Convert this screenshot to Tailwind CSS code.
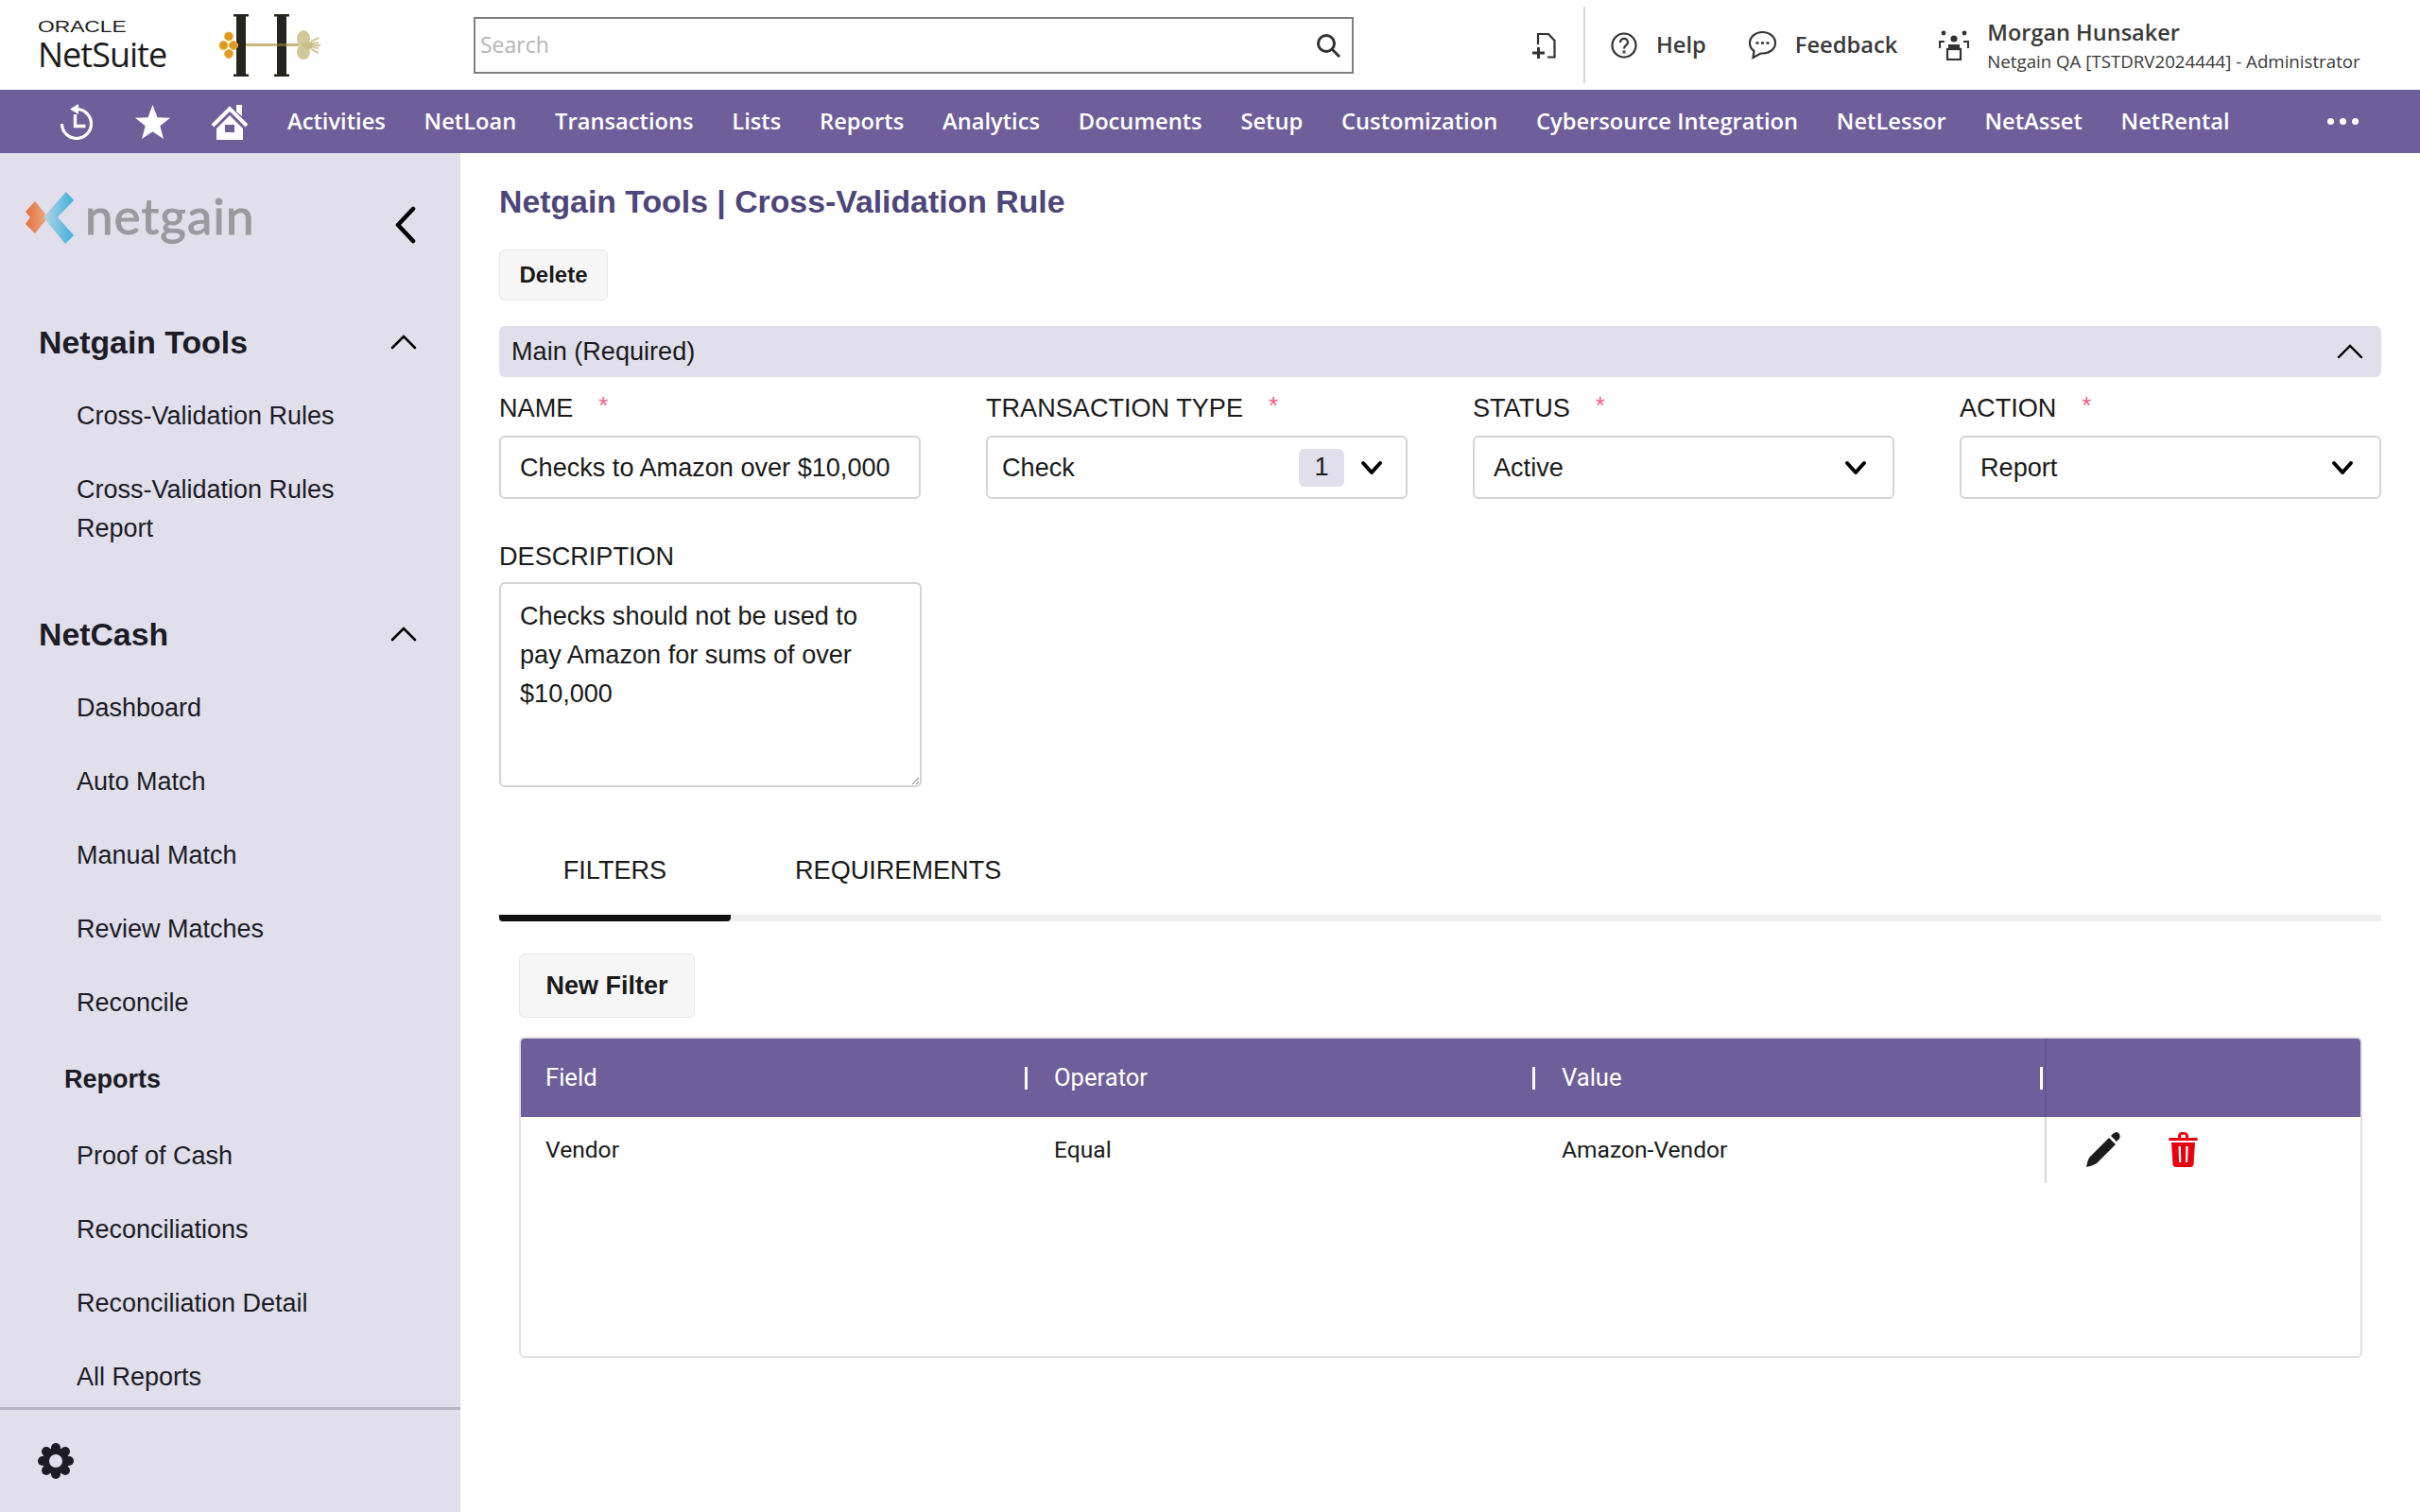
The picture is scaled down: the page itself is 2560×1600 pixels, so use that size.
<!DOCTYPE html>
<html lang="en">
<head>
  <meta charset="UTF-8">
  <title>Netgain Tools | Cross-Validation Rule</title>
  <script src="https://cdn.jsdelivr.net/npm/@tailwindcss/browser@4"></script>
</head>
<body class="bg-white text-[#1a1a1a] font-['Liberation_Sans',Arial,sans-serif]">
<div class="w-[2560px] h-[1600px] overflow-hidden flex flex-col">

  <!-- Top header -->
  <header class="h-[95px] flex items-center font-['Open_Sans',sans-serif] shrink-0">
    <div class="w-[192px] pl-[40px] flex flex-col text-[#1c1c1c]">
      <span class="font-['Liberation_Sans',sans-serif] text-[17px] leading-[20px] scale-x-[1.34] origin-left">ORACLE</span>
      <span class="text-[36px] leading-[38px] tracking-[-1px]">NetSuite</span>
    </div>
    <!-- H logo -->
    <svg class="w-[150px] h-[70px] mr-[159px]" viewBox="0 0 150 70">
      <rect x="58" y="3" width="10" height="64" fill="#26241f"/>
      <rect x="55" y="2" width="16" height="2.500" fill="#26241f"/>
      <rect x="55" y="65.500" width="16" height="2.500" fill="#26241f"/>
      <rect x="101" y="3" width="10" height="64" fill="#26241f"/>
      <rect x="98" y="2" width="16" height="2.500" fill="#26241f"/>
      <rect x="98" y="65.500" width="16" height="2.500" fill="#26241f"/>
      <rect x="68" y="33" width="56" height="3" fill="#c9b77e"/>
      <rect x="101" y="33" width="10" height="3" fill="#6b5f38"/>
      <g fill="#dd9a20" stroke="#eeb64a" stroke-width="1">
        <circle cx="50" cy="25.500" r="4.500"/><circle cx="44.500" cy="35" r="4.500"/><circle cx="55" cy="35" r="4.500"/><circle cx="50" cy="44" r="4.500"/>
      </g>
      <ellipse cx="129" cy="28" rx="7" ry="9" fill="#d2c89a"/>
      <ellipse cx="129" cy="42" rx="7" ry="8" fill="#d2c89a"/>
      <ellipse cx="134" cy="35" rx="6" ry="4" fill="#c8bd8b"/>
      <path d="M138 35h9M137 31l8-4M137 39l8 4M139 33l6-1M139 37l6 1" stroke="#d2c89a" stroke-width="2"/>
    </svg>

    <!-- Search -->
    <div class="w-[931px] h-[60px] border-2 border-[#808080] flex items-center pl-[5px] pr-[12px]">
      <input type="text" placeholder="Search" class="flex-1 text-[23px] outline-none placeholder:text-[#b5b5b5]">
      <svg class="w-[26px] h-[26px]" viewBox="0 0 26 26" fill="none" stroke="#333" stroke-width="3"><circle cx="11" cy="11" r="8.500"/><path d="M17 17l8 8"/></svg>
    </div>

    <!-- New record -->
    <svg class="w-[28px] h-[28px] ml-[188px]" viewBox="0 0 28 28" fill="none" stroke="#333" stroke-width="2.200"><path d="M7 13V2h11l6.500 7v17.500H17"/><path d="M1 22h13M7.500 16v12" stroke-width="3"/></svg>
    <div class="w-[2px] h-[81px] bg-[#d9d9d9] ml-[27px]"></div>

    <svg class="w-[28px] h-[28px] ml-[27px]" viewBox="0 0 28 28" fill="none" stroke="#333" stroke-width="2.200"><circle cx="14" cy="14" r="12.500"/><path d="M10 11c0-5.500 8-5.500 8 0 0 3-4 3-4 6.500"/><circle cx="14" cy="21" r="0.600"/></svg>
    <span class="ml-[20px] text-[23.7px] font-semibold text-[#3a3a3a] leading-none">Help</span>

    <svg class="w-[31px] h-[31px] ml-[44px]" viewBox="0 0 31 31" fill="none" stroke="#333" stroke-width="2.200"><path d="M15.500 2C8 2 2 7 2 13.500c0 3.500 1.800 6.500 4.500 8.500L5.500 29l8-4.500h2c7.500 0 13.500-4.500 13.500-11S23 2 15.500 2z"/><path d="M9.500 13.500h1M15 13.500h1M20.500 13.500h1" stroke-width="2.600" stroke-linecap="round"/></svg>
    <span class="ml-[19px] text-[23.7px] font-semibold text-[#3a3a3a] leading-none">Feedback</span>

    <svg class="w-[32px] h-[32px] ml-[44px]" viewBox="0 0 32 32" fill="#333">
      <circle cx="16" cy="9" r="3.600"/><circle cx="5" cy="3" r="2.400"/><circle cx="27" cy="3" r="2.400"/>
      <path d="M1 19v-7h5M31 19v-7h-5" fill="none" stroke="#333" stroke-width="2.200"/>
      <path d="M10 20v-5h12v5z"/>
      <rect x="9" y="20" width="14" height="11" fill="none" stroke="#333" stroke-width="2.200"/>
    </svg>
    <div class="ml-[19px] pt-[1px] flex flex-col text-[#3a3a3a]">
      <span class="text-[23.5px] leading-[32px] font-semibold">Morgan Hunsaker</span>
      <span class="text-[18.7px] leading-[29px] whitespace-nowrap">Netgain QA [TSTDRV2024444] - Administrator</span>
    </div>
  </header>

  <!-- Purple nav -->
  <nav class="h-[67px] shrink-0 bg-[#6e5f9b] flex items-center text-white font-['Open_Sans',sans-serif] text-[23.7px] font-semibold leading-none">
    <svg class="w-[36px] h-[38px] ml-[63px]" viewBox="0 0 36 38" fill="none" stroke="#fff" stroke-width="3.200"><path d="M18 5.500A15.500 15.500 0 1 1 2.500 21"/><path d="M11 5.500l9-5.500v11z" fill="#fff" stroke="none"/><path d="M16.500 11v12.500h11" stroke-width="3.400"/></svg>
    <svg class="w-[37px] h-[36px] ml-[44px]" viewBox="0 0 37 36" fill="#fff"><path d="M18.500 0l5 13.200 13.500.6-10.700 8.500L30 36l-11.500-7.800L7 36l3.700-13.700L0 13.800l13.500-.6z"/></svg>
    <svg class="w-[40px] h-[38px] ml-[43px]" viewBox="0 0 40 38" fill="#fff"><path d="M2 23L20 5l18 18" fill="none" stroke="#fff" stroke-width="4"/><path d="M27 1h6v12l-6-5z"/><path fill-rule="evenodd" d="M20 12L6 26v12h28V26zM15 22h10v8H15z"/></svg>
    <div class="flex items-center gap-[40.800px] ml-[41px] pt-[1px] whitespace-nowrap">
      <span>Activities</span><span>NetLoan</span><span>Transactions</span><span>Lists</span><span>Reports</span><span>Analytics</span><span>Documents</span><span>Setup</span><span>Customization</span><span>Cybersource Integration</span><span>NetLessor</span><span>NetAsset</span><span>NetRental</span>
    </div>
    <div class="flex gap-[6px] ml-auto mr-[65px]">
      <span class="w-[7px] h-[7px] rounded-full bg-white"></span><span class="w-[7px] h-[7px] rounded-full bg-white"></span><span class="w-[7px] h-[7px] rounded-full bg-white"></span>
    </div>
  </nav>

  <div class="flex flex-1 min-h-0">
    <!-- Sidebar -->
    <aside class="w-[487px] shrink-0 bg-[#e0dfeb] flex flex-col text-[27px] text-[#1c1b26]">
      <div class="h-[161px] shrink-0 flex items-start pl-[27px] pr-[46px] pt-[41px]">
        <svg class="w-[52px] h-[56px]" viewBox="0 0 52 56">
          <defs>
            <linearGradient id="ngBlue" x1="0" x2="1" y1="0" y2="0"><stop offset="0" stop-color="#b9d4e4"/><stop offset="1" stop-color="#3db0dc"/></linearGradient>
            <linearGradient id="ngOrange" x1="0" x2="1" y1="0" y2="0"><stop offset="0" stop-color="#e56f38"/><stop offset="1" stop-color="#eeaa8c"/></linearGradient>
          </defs>
          <path d="M10 10L24 27 10 44 0 34l5-7-5-6z" fill="url(#ngOrange)"/>
          <path d="M43 0l8 9-17 18 17 19-9 9-23-28z" fill="url(#ngBlue)"/>
        </svg>
        <span class="font-['Lato',sans-serif] text-[53px] leading-[56px] text-[#9a9a9e] ml-[11px] tracking-[1px] -mt-[3px] [-webkit-text-stroke:1px_#9a9a9e]">netgain</span>
        <svg class="w-[24px] h-[40px] ml-auto mt-[15px]" viewBox="0 0 24 40" fill="none" stroke="#000" stroke-width="4.500" stroke-linecap="round" stroke-linejoin="round"><path d="M20 3L4 20l16 17"/></svg>
      </div>

      <div class="flex items-center h-[78px] pl-[41px] pr-[46px] font-bold text-[33.8px] shrink-0">
        <span>Netgain Tools</span>
        <svg class="w-[28px] h-[16px] ml-auto" viewBox="0 0 28 16" fill="none" stroke="#000" stroke-width="2.600" stroke-linecap="round"><path d="M2 14L14 2l12 12"/></svg>
      </div>
      <div class="flex items-center h-[78px] pl-[81px]">Cross-Validation Rules</div>
      <div class="flex items-center h-[119px] pl-[81px] leading-[41px]">Cross-Validation Rules<br>Report</div>

      <div class="flex items-center h-[78px] mt-[34px] pl-[41px] pr-[46px] font-bold text-[33.8px] shrink-0">
        <span>NetCash</span>
        <svg class="w-[28px] h-[16px] ml-auto" viewBox="0 0 28 16" fill="none" stroke="#000" stroke-width="2.600" stroke-linecap="round"><path d="M2 14L14 2l12 12"/></svg>
      </div>
      <div class="flex items-center h-[78px] pl-[81px]">Dashboard</div>
      <div class="flex items-center h-[78px] pl-[81px]">Auto Match</div>
      <div class="flex items-center h-[78px] pl-[81px]">Manual Match</div>
      <div class="flex items-center h-[78px] pl-[81px]">Review Matches</div>
      <div class="flex items-center h-[78px] pl-[81px]">Reconcile</div>
      <div class="flex items-center h-[84px] pl-[68px] font-bold">Reports</div>
      <div class="flex items-center h-[78px] pl-[81px]">Proof of Cash</div>
      <div class="flex items-center h-[78px] pl-[81px]">Reconciliations</div>
      <div class="flex items-center h-[78px] pl-[81px]">Reconciliation Detail</div>
      <div class="flex items-center h-[78px] pl-[81px]">All Reports</div>

      <div class="mt-[-7px] h-[3px] bg-[#b8b6c6] shrink-0"></div>
      <div class="flex-1 flex items-start pl-[40px] pt-[35px]">
        <svg class="w-[38px] h-[38px]" viewBox="0 0 38 38">
          <g fill="#1c1b26">
            <circle cx="19" cy="5" r="5"/><circle cx="19" cy="33" r="5"/><circle cx="5" cy="19" r="5"/><circle cx="33" cy="19" r="5"/>
            <circle cx="9" cy="9" r="5"/><circle cx="29" cy="9" r="5"/><circle cx="9" cy="29" r="5"/><circle cx="29" cy="29" r="5"/>
            <circle cx="19" cy="19" r="14"/>
          </g>
          <circle cx="19" cy="19" r="7" fill="#e0dfeb"/>
        </svg>
      </div>
    </aside>

    <!-- Main content -->
    <main class="flex-1 min-w-0 pl-[41px] pr-[41px] pt-[30px]">
      <h1 class="text-[33.8px] leading-[42px] font-bold text-[#4e4579]">Netgain Tools | Cross-Validation Rule</h1>
      <button class="mt-[30px] h-[54px] w-[115px] bg-[#f6f6f6] border border-[#e8e8e8] rounded-[6px] text-[24px] font-bold block">Delete</button>

      <div class="mt-[27px] h-[54px] bg-[#e0dfeb] rounded-[6px] flex items-center pl-[13px] pr-[19px] text-[27.1px]">
        <span class="pt-[1px]">Main (Required)</span>
        <svg class="w-[28px] h-[16px] ml-auto" viewBox="0 0 28 16" fill="none" stroke="#000" stroke-width="2.400" stroke-linecap="round"><path d="M2 14L14 2l12 12"/></svg>
      </div>

      <div class="grid grid-cols-4 gap-x-[69px] mt-[16px]">
        <div>
          <label class="flex items-center h-[32px] pt-[2px] text-[27.1px]">NAME<span class="text-[#f0608a] text-[26px] ml-[27px] -mt-[6px]">*</span></label>
          <input value="Checks to Amazon over $10,000" class="mt-[14px] w-full h-[67px] border-2 border-[#d4d4d8] rounded-[6px] px-[20px] pt-[1px] text-[27.1px] outline-none">
        </div>
        <div>
          <label class="flex items-center h-[32px] pt-[2px] text-[27.1px]">TRANSACTION TYPE<span class="text-[#f0608a] text-[26px] ml-[27px] -mt-[6px]">*</span></label>
          <div class="mt-[14px] h-[67px] border-2 border-[#d4d4d8] rounded-[6px] flex items-center pl-[15px] pr-[24px] text-[27.1px]">
            <span class="pt-[1px]">Check</span>
            <span class="ml-auto w-[48px] h-[40px] bg-[#e0dfeb] rounded-[6px] flex items-center justify-center">1</span>
            <svg class="w-[24px] h-[16px] ml-[17px]" viewBox="0 0 24 16" fill="none" stroke="#000" stroke-width="4" stroke-linecap="round" stroke-linejoin="round"><path d="M3 3l9 10 9-10"/></svg>
          </div>
        </div>
        <div>
          <label class="flex items-center h-[32px] pt-[2px] text-[27.1px]">STATUS<span class="text-[#f0608a] text-[26px] ml-[27px] -mt-[6px]">*</span></label>
          <div class="mt-[14px] h-[67px] border-2 border-[#d4d4d8] rounded-[6px] flex items-center pl-[20px] pr-[27px] text-[27.1px]">
            <span class="pt-[1px]">Active</span>
            <svg class="w-[24px] h-[16px] ml-auto" viewBox="0 0 24 16" fill="none" stroke="#000" stroke-width="4" stroke-linecap="round" stroke-linejoin="round"><path d="M3 3l9 10 9-10"/></svg>
          </div>
        </div>
        <div>
          <label class="flex items-center h-[32px] pt-[2px] text-[27.1px]">ACTION<span class="text-[#f0608a] text-[26px] ml-[27px] -mt-[6px]">*</span></label>
          <div class="mt-[14px] h-[67px] border-2 border-[#d4d4d8] rounded-[6px] flex items-center pl-[20px] pr-[27px] text-[27.1px]">
            <span class="pt-[1px]">Report</span>
            <svg class="w-[24px] h-[16px] ml-auto" viewBox="0 0 24 16" fill="none" stroke="#000" stroke-width="4" stroke-linecap="round" stroke-linejoin="round"><path d="M3 3l9 10 9-10"/></svg>
          </div>
        </div>
      </div>

      <label class="flex items-center h-[32px] pt-[2px] mt-[44px] text-[27.1px]">DESCRIPTION</label>
      <textarea readonly class="block mt-[12px] w-[447px] h-[217px] border-2 border-[#d4d4d8] rounded-[6px] px-[20px] py-[13px] text-[27.1px] leading-[41px] outline-none">Checks should not be used to pay Amazon for sums of over $10,000</textarea>

      <!-- Tabs -->
      <div class="mt-[47px] flex text-[27.1px] border-b-[7px] border-[#efefef] h-[95px]">
        <div class="w-[245px] h-[95px] border-b-[7px] border-[#111] rounded-b-[4px] pt-[25px] text-center leading-[32px]">FILTERS</div>
        <div class="pl-[68px] pt-[25px] leading-[32px]">REQUIREMENTS</div>
      </div>

      <div class="pl-[21px] pr-[20px]">
        <button class="mt-[34px] block w-[186px] h-[68px] bg-[#f6f6f6] border border-[#e8e8e8] rounded-[6px] text-[27px] font-bold">New Filter</button>

        <!-- Filter table -->
        <div class="mt-[20px] h-[340px] border-2 border-[#e2e2e6] rounded-[6px] font-['Roboto',sans-serif] text-[24.6px] overflow-hidden">
          <div class="grid grid-cols-[538px_537px_537px_1fr] h-[83px] bg-[#6e5f9b] text-white items-center text-[25.6px]">
            <div class="pl-[26px] h-full flex items-center justify-between">Field<span class="w-[3px] h-[24px] bg-white mr-[2px]"></span></div>
            <div class="pl-[26px] h-full flex items-center justify-between">Operator<span class="w-[3px] h-[24px] bg-white mr-[2px]"></span></div>
            <div class="pl-[26px] h-full flex items-center justify-between">Value<span class="w-[3px] h-[24px] bg-white mr-[2px]"></span></div>
            <div class="h-full border-l-2 border-[#635590]"></div>
          </div>
          <div class="grid grid-cols-[538px_537px_537px_1fr] h-[70px] items-center">
            <div class="pl-[26px]">Vendor</div>
            <div class="pl-[26px]">Equal</div>
            <div class="pl-[26px]">Amazon-Vendor</div>
            <div class="h-full border-l-2 border-[#d9d9dd] pl-[42px] flex items-center gap-[51px] pb-[2px]">
              <svg class="w-[36px] h-[37px]" viewBox="0 0 36 37" fill="#1c1c1c"><path d="M0 37c1-5 2-9 4-11L24 6l7 7-20 20c-3 2-7 3-11 4z"/><path d="M26 4l2.500-2.500c2-2 4.500-2 6 0s1.500 4 0 6L32 10z"/></svg>
              <svg class="w-[31px] h-[37px]" viewBox="0 0 31 37" fill="#e8000e"><path fill-rule="evenodd" d="M10 6V4c0-2 2-4 4-4h3c2 0 4 2 4 4v2h8c1 0 2 .5 2 1.500S30 9 29 9H2C1 9 0 8.500 0 7.500S1 6 2 6zm3 0h5V4c0-.8-.5-1.300-1.300-1.300h-2.400C13.500 2.700 13 3.200 13 4z"/><path fill-rule="evenodd" d="M3 11h25l-1.500 23c0 2-1.500 3-3 3h-16c-1.500 0-3-1-3-3zM10.500 15l.6 17h2.200l-.4-17zm7.800 0l-.4 17h2.200l.6-17z"/></svg>
            </div>
          </div>
        </div>
      </div>
    </main>
  </div>
</div>
</body>
</html>
